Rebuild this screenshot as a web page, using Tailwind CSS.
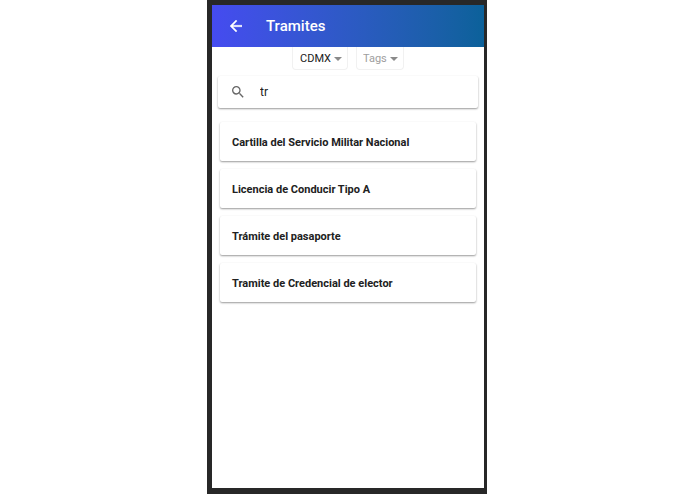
<!DOCTYPE html>
<html lang="es">
<head>
  <meta charset="UTF-8">
  <meta name="viewport" content="width=device-width, initial-scale=1.0">
  <title>Tramites</title>
  <script src="https://cdn.jsdelivr.net/npm/@tailwindcss/browser@4"></script>
</head>
<body class="bg-white pr-px font-['Roboto',sans-serif] text-[#212121]">
  <div class="mx-auto flex min-h-screen w-full max-w-[280px] flex-col border-t-5 border-r-3 border-b-6 border-l-5 border-[#282828] bg-white">

    <header class="flex h-[42px] items-center gap-5 bg-linear-to-r from-[#454bf0] to-[#0b619a] px-4 text-white">
      <button type="button" aria-label="Regresar" class="size-4">
        <svg viewBox="4 4 16 16" class="size-4 p-0.5" fill="currentColor" stroke="currentColor" stroke-width=".5"><path d="M20 11H7.830l5.590-5.590L12 4l-8 8 8 8 1.410-1.410L7.830 13H20v-2z"/></svg>
      </button>
      <h1 class="pl-0.5 text-[15px] leading-5 font-medium">Tramites</h1>
    </header>

    <main class="flex-1 px-1.5">
      <div class="flex justify-center gap-2">
        <div class="relative">
          <select aria-label="Estado" class="block h-[23px] w-14 appearance-none rounded-b-sm border border-t-0 border-[#f1f1f1] bg-white pt-0.5 pl-[7px] text-[11px] leading-4 text-[#212121]">
            <option>CDMX</option>
          </select>
          <svg viewBox="0 0 8 4" class="pointer-events-none absolute top-2.5 right-1.5 h-1 w-2" fill="#8a8a8a"><path d="M0 0h8L4 4z"/></svg>
        </div>
        <div class="relative">
          <select aria-label="Tags" class="block h-[23px] w-12 appearance-none rounded-b-sm border border-t-0 border-[#f1f1f1] bg-white pt-0.5 pl-1.5 text-[11px] leading-4 text-[#9e9e9e]">
            <option>Tags</option>
          </select>
          <svg viewBox="0 0 8 4" class="pointer-events-none absolute top-2.5 right-1.5 h-1 w-2" fill="#8a8a8a"><path d="M0 0h8L4 4z"/></svg>
        </div>
      </div>

      <label class="mt-1.5 flex h-8 items-center gap-4 rounded-xs bg-white px-3.5 shadow-[0_1px_2px_rgba(0,0,0,0.4)]">
        <svg viewBox="3 3 18 18" class="size-3 shrink-0" fill="#666"><path d="M15.500 14h-.79l-.28-.27A6.471 6.471 0 0 0 16 9.500 6.500 6.500 0 1 0 9.500 16c1.610 0 3.090-.59 4.230-1.570l.27.28v.79l5 4.990L20.490 19l-4.990-5zm-6 0C7.010 14 5 11.990 5 9.500S7.010 5 9.500 5 14 7.010 14 9.500 11.990 14 9.500 14z"/></svg>
        <input type="text" aria-label="Buscar" value="tr" class="w-full min-w-0 text-[12px] leading-4 outline-none">
      </label>

      <ul class="mx-0.5 mt-3.5 flex flex-col gap-2 text-[11px] leading-4 font-bold">
        <li class="flex h-[39px] items-center rounded-xs bg-white px-3 pt-0.5 shadow-[0_1px_2px_rgba(0,0,0,0.4)]">Cartilla del Servicio Militar Nacional</li>
        <li class="flex h-[39px] items-center rounded-xs bg-white px-3 pt-0.5 shadow-[0_1px_2px_rgba(0,0,0,0.4)]">Licencia de Conducir Tipo A</li>
        <li class="flex h-[39px] items-center rounded-xs bg-white px-3 pt-0.5 shadow-[0_1px_2px_rgba(0,0,0,0.4)]">Trámite del pasaporte</li>
        <li class="flex h-[39px] items-center rounded-xs bg-white px-3 pt-0.5 shadow-[0_1px_2px_rgba(0,0,0,0.4)]">Tramite de Credencial de elector</li>
      </ul>
    </main>
  </div>
</body>
</html>
